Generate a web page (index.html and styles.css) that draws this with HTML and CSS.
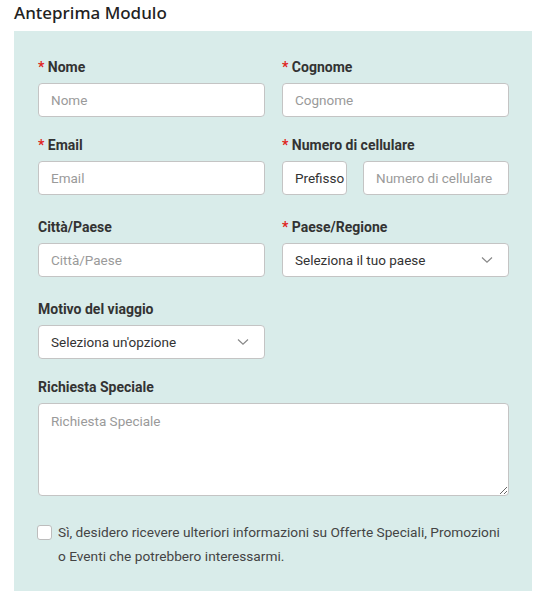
FILE: index.html
```html
<!DOCTYPE html>
<html lang="it">
<head>
<meta charset="utf-8">
<link rel="stylesheet" href="styles.css">
</head>
<body>
<h2 class="title">Anteprima Modulo</h2>
<form class="panel">
  <div class="grid">
    <div class="field">
      <label class="label"><span class="req">*</span> Nome</label>
      <input class="input" type="text" placeholder="Nome">
    </div>
    <div class="field">
      <label class="label"><span class="req">*</span> Cognome</label>
      <input class="input" type="text" placeholder="Cognome">
    </div>
    <div class="field">
      <label class="label"><span class="req">*</span> Email</label>
      <input class="input" type="text" placeholder="Email">
    </div>
    <div class="field">
      <label class="label"><span class="req">*</span> Numero di cellulare</label>
      <div class="phone">
        <div class="input prefix">Prefisso</div>
        <input class="input number" type="text" placeholder="Numero di cellulare">
      </div>
    </div>
    <div class="field spaced">
      <label class="label">Città/Paese</label>
      <input class="input" type="text" placeholder="Città/Paese">
    </div>
    <div class="field spaced">
      <label class="label"><span class="req">*</span> Paese/Regione</label>
      <div class="input select">
        <span>Seleziona il tuo paese</span>
        <svg class="chev" width="12" height="8" viewBox="0 0 12 8"><path d="M1 1.5 L6 6.2 L11 1.5" fill="none" stroke="#888" stroke-width="1.2"/></svg>
      </div>
    </div>
    <div class="field spaced">
      <label class="label">Motivo del viaggio</label>
      <div class="input select">
        <span>Seleziona un'opzione</span>
        <svg class="chev" width="12" height="8" viewBox="0 0 12 8"><path d="M1 1.5 L6 6.2 L11 1.5" fill="none" stroke="#888" stroke-width="1.2"/></svg>
      </div>
    </div>
    <div class="field spaced"></div>
    <div class="field wide">
      <label class="label">Richiesta Speciale</label>
      <textarea class="input textarea" placeholder="Richiesta Speciale"></textarea>
    </div>
  </div>
  <div class="consent">
    <span class="box"></span>
    <p class="consent-text">Sì, desidero ricevere ulteriori informazioni su Offerte Speciali, Promozioni o Eventi che potrebbero interessarmi.</p>
  </div>
</form>
</body>
</html>
```
FILE: styles.css
```css
* { box-sizing: border-box; }
body {
  margin: 0;
  background: #fff;
  font-family: Roboto, "Liberation Sans", sans-serif;
  color: #333;
}
.title {
  margin: 0;
  padding: 2px 0 0 14px;
  height: 31px;
  font-family: "Noto Sans", "Open Sans", sans-serif;
  font-weight: 500;
  font-size: 17px;
  line-height: 22px;
  color: #222;
}
.panel {
  margin: 0 9px 0 14px;
  background: #d9ecea;
  padding: 26px 23px 23px 24px;
}
.grid {
  display: grid;
  grid-template-columns: 227px 227px;
  column-gap: 17px;
  row-gap: 18px;
}
.field { display: flex; flex-direction: column; }
.spaced { margin-top: 4px; }
.wide { grid-column: 1 / 3; }
.label {
  font-size: 14px;
  line-height: 20px;
  font-weight: 700;
  color: #333;
  margin-bottom: 6px;
}
.req { color: #e0231c; }
.input {
  height: 34px;
  border: 1px solid #c4c4c4;
  border-radius: 4px;
  background: #fff;
  padding: 0 12px;
  font-family: Roboto, "Liberation Sans", sans-serif;
  font-size: 13.5px;
  color: #333;
  width: 100%;
  outline: none;
}
.input::placeholder { color: #9a9a9a; }
.phone { display: flex; gap: 16px; }
.prefix {
  width: 65px;
  flex: none;
  padding: 0 1px 0 12px;
  display: flex;
  align-items: center;
  overflow: hidden;
  white-space: nowrap;
  color: #333;
}
.number { flex: 1; width: auto; min-width: 0; }
.select {
  display: flex;
  align-items: center;
  justify-content: space-between;
  padding-right: 15px;
}
.textarea {
  height: 93px;
  padding: 8px 12px;
  resize: vertical;
  line-height: 18px;
}
.consent {
  display: flex;
  align-items: flex-start;
  margin-top: 24px;
}
.box {
  flex: none;
  width: 15px;
  height: 15px;
  margin: 5px 6px 0 -1px;
  border: 1px solid #bdbdbd;
  border-radius: 3px;
  background: #fff;
}
.consent-text {
  margin: 0;
  font-size: 13.7px;
  line-height: 24px;
  color: #444;
}
```
